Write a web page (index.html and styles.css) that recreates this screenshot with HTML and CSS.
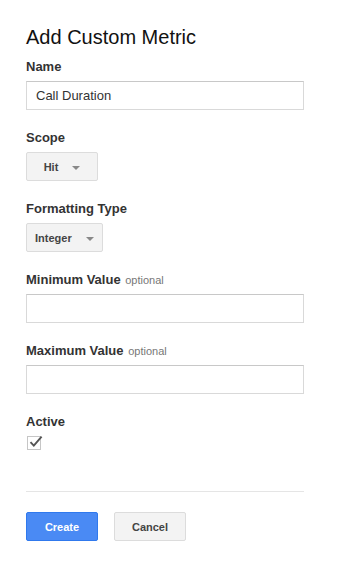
FILE: index.html
```html
<!DOCTYPE html>
<html lang="en">
<head>
  <meta charset="UTF-8" />
  <title>Add Custom Metric</title>
  <link rel="stylesheet" href="styles.css">
</head>
<body>

  <div class="page">
    <h1 class="title">Add Custom Metric</h1>

    <div class="field">
      <div class="label">Name</div>
      <div class="text-input">Call Duration</div>
    </div>

    <div class="field">
      <div class="label">Scope</div>
      <div class="select">Hit <span class="arrow"></span></div>
    </div>

    <div class="field">
      <div class="label">Formatting Type</div>
      <div class="select">Integer <span class="arrow"></span></div>
    </div>

    <div class="field">
      <div class="label">Minimum Value <span class="optional">optional</span></div>
      <div class="text-input"></div>
    </div>

    <div class="field">
      <div class="label">Maximum Value <span class="optional">optional</span></div>
      <div class="text-input"></div>
    </div>

    <div class="field">
      <div class="label">Active</div>
      <div class="checkbox">
        <svg width="16" height="16" viewBox="0 0 16 16">
          <path d="M2.5 8.2 L5.8 11.6 L13.6 2.6" fill="none" stroke="#555" stroke-width="1.9" />
        </svg>
      </div>
    </div>

    <div class="divider"></div>

    <div class="actions">
      <div class="btn btn-primary">Create</div>
      <div class="btn">Cancel</div>
    </div>
  </div>

</body>
</html>
```

FILE: styles.css
```css
* {
  margin: 0;
  padding: 0;
  box-sizing: border-box;
}

body {
  font-family: Arial, "Liberation Sans", sans-serif;
  background: white;
  color: #222;
}

.page {
  padding: 25px 0 0 26px;
  width: 304px;
}

.title {
  font-size: 20px;
  font-weight: normal;
  line-height: 24px;
  color: #111;
  margin-bottom: 10px;
}

.field {
  margin-bottom: 20px;
}

.label {
  font-size: 13px;
  font-weight: bold;
  line-height: 16px;
  color: #333;
  margin-bottom: 6px;
}

.optional {
  font-size: 11px;
  font-weight: normal;
  color: #777;
  margin-left: 1px;
}

.text-input {
  width: 278px;
  height: 29px;
  border: 1px solid #d9d9d9;
  border-top-color: #c8c8c8;
  padding: 0 9px;
  font-size: 13px;
  line-height: 27px;
  color: #333;
}

.select {
  display: inline-flex;
  align-items: center;
  justify-content: center;
  min-width: 72px;
  height: 29px;
  padding: 0 8px;
  background: #f3f3f3;
  border: 1px solid #dcdcdc;
  border-radius: 2px;
  font-size: 11px;
  font-weight: bold;
  color: #444;
}

.arrow {
  display: inline-block;
  margin-left: 14px;
  margin-top: 2px;
  border-left: 4px solid transparent;
  border-right: 4px solid transparent;
  border-top: 4px solid #888;
}

.checkbox {
  position: relative;
  width: 14px;
  height: 14px;
  margin: 2px 0 0 1px;
  border: 1px solid #c6c6c6;
}

.checkbox svg {
  position: absolute;
  left: 0;
  top: -3px;
}

.divider {
  width: 278px;
  height: 1px;
  background: #e5e5e5;
  margin-top: 41px;
}

.actions {
  display: flex;
  gap: 16px;
  margin-top: 20px;
}

.btn {
  width: 72px;
  height: 29px;
  display: flex;
  align-items: center;
  justify-content: center;
  background: #f3f3f3;
  border: 1px solid #dcdcdc;
  border-radius: 2px;
  font-size: 11px;
  font-weight: bold;
  color: #444;
}

.btn-primary {
  background: #4a8af4;
  border-color: #3079ed;
  color: white;
}
```
